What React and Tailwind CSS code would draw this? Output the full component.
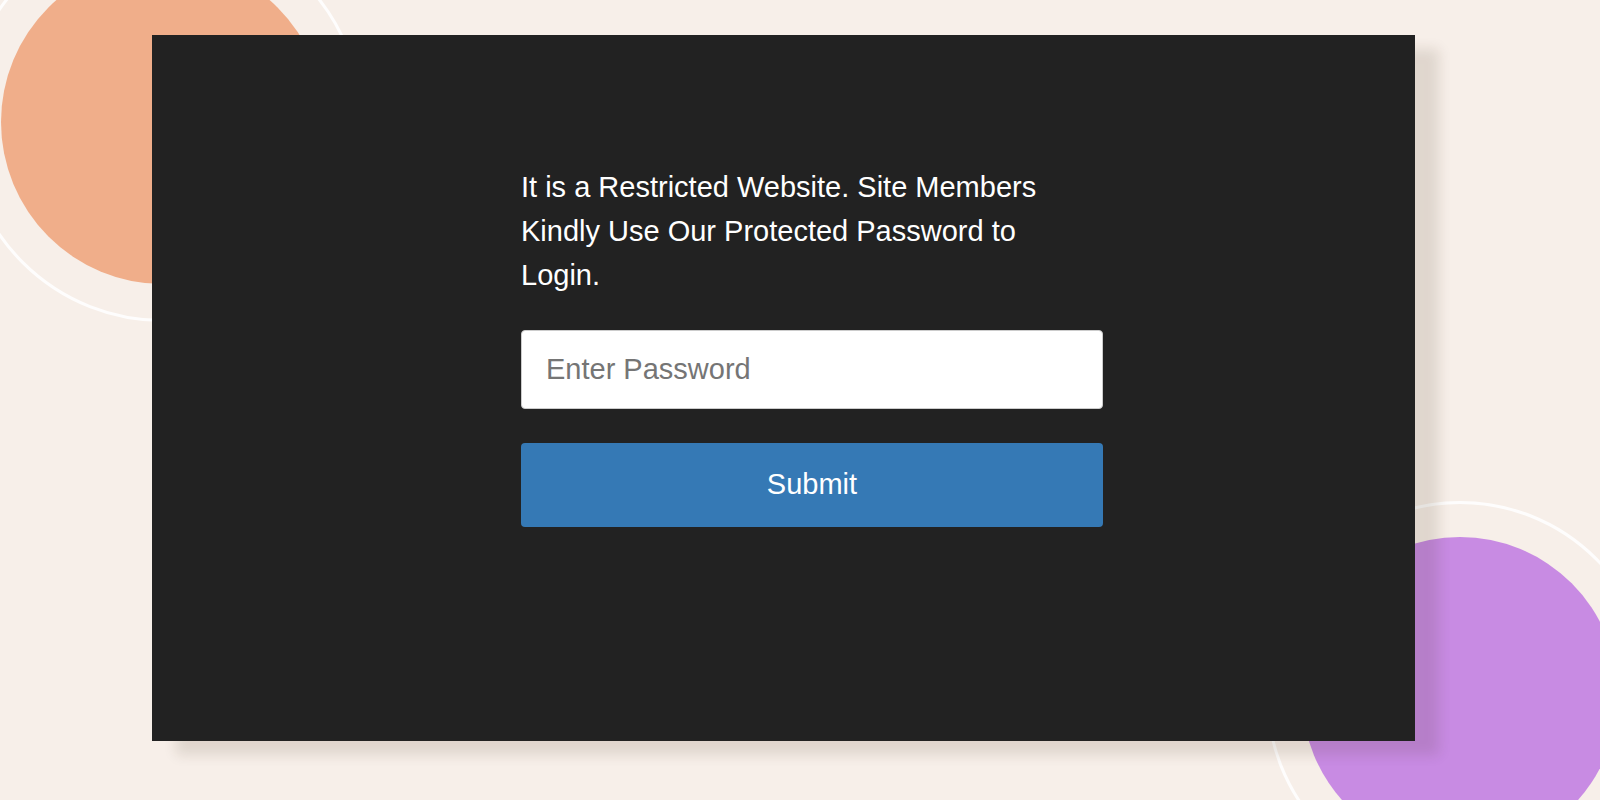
import { useState } from 'react';

export default function App() {
    const [password, setPassword] = useState('');

    const handleSubmit = (e) => {
        e.preventDefault();
    };

    return (
        <div className="relative w-full h-[800px] overflow-hidden bg-[#f7efe9] font-['Liberation_Sans',Arial,sans-serif]">
            {/* decorative circles with outer rings */}
            <div className="absolute left-[-37px] top-[-78px] w-[400px] h-[400px] rounded-full border-[3px] border-white/90 flex items-center justify-center">
                <div className="w-[324px] h-[324px] rounded-full bg-[#f0ae8a]"></div>
            </div>
            <div className="absolute left-[1266px] top-[501px] w-[388px] h-[388px] rounded-full border-[3px] border-white/90 flex items-center justify-center">
                <div className="w-[316px] h-[316px] rounded-full bg-[#c88be3]"></div>
            </div>

            <div className="relative pt-[35px] pl-[152px]">
                <div className="w-[1263px] h-[706px] bg-[#222222] shadow-[24px_14px_12px_rgba(60,40,20,0.12)] pl-[369px] pt-[130px]">
                    <p className="w-[545px] text-[29px] leading-[44px] text-white">
                        It is a Restricted Website. Site Members Kindly Use Our Protected Password to Login.
                    </p>
                    <form onSubmit={handleSubmit} className="w-[582px] mt-[33px] flex flex-col gap-[34px]">
                        <input
                            type="password"
                            value={password}
                            onChange={(e) => setPassword(e.target.value)}
                            placeholder="Enter Password"
                            className="h-[79px] w-full bg-white rounded-[4px] border border-[#cccccc] px-[24px] text-[29px] text-[#333] placeholder:text-[#757575] outline-none"
                        />
                        <button
                            type="submit"
                            className="h-[84px] w-full rounded-[4px] bg-[#3579b5] text-white text-[29px]"
                        >
                            Submit
                        </button>
                    </form>
                </div>
            </div>
        </div>
    );
}
